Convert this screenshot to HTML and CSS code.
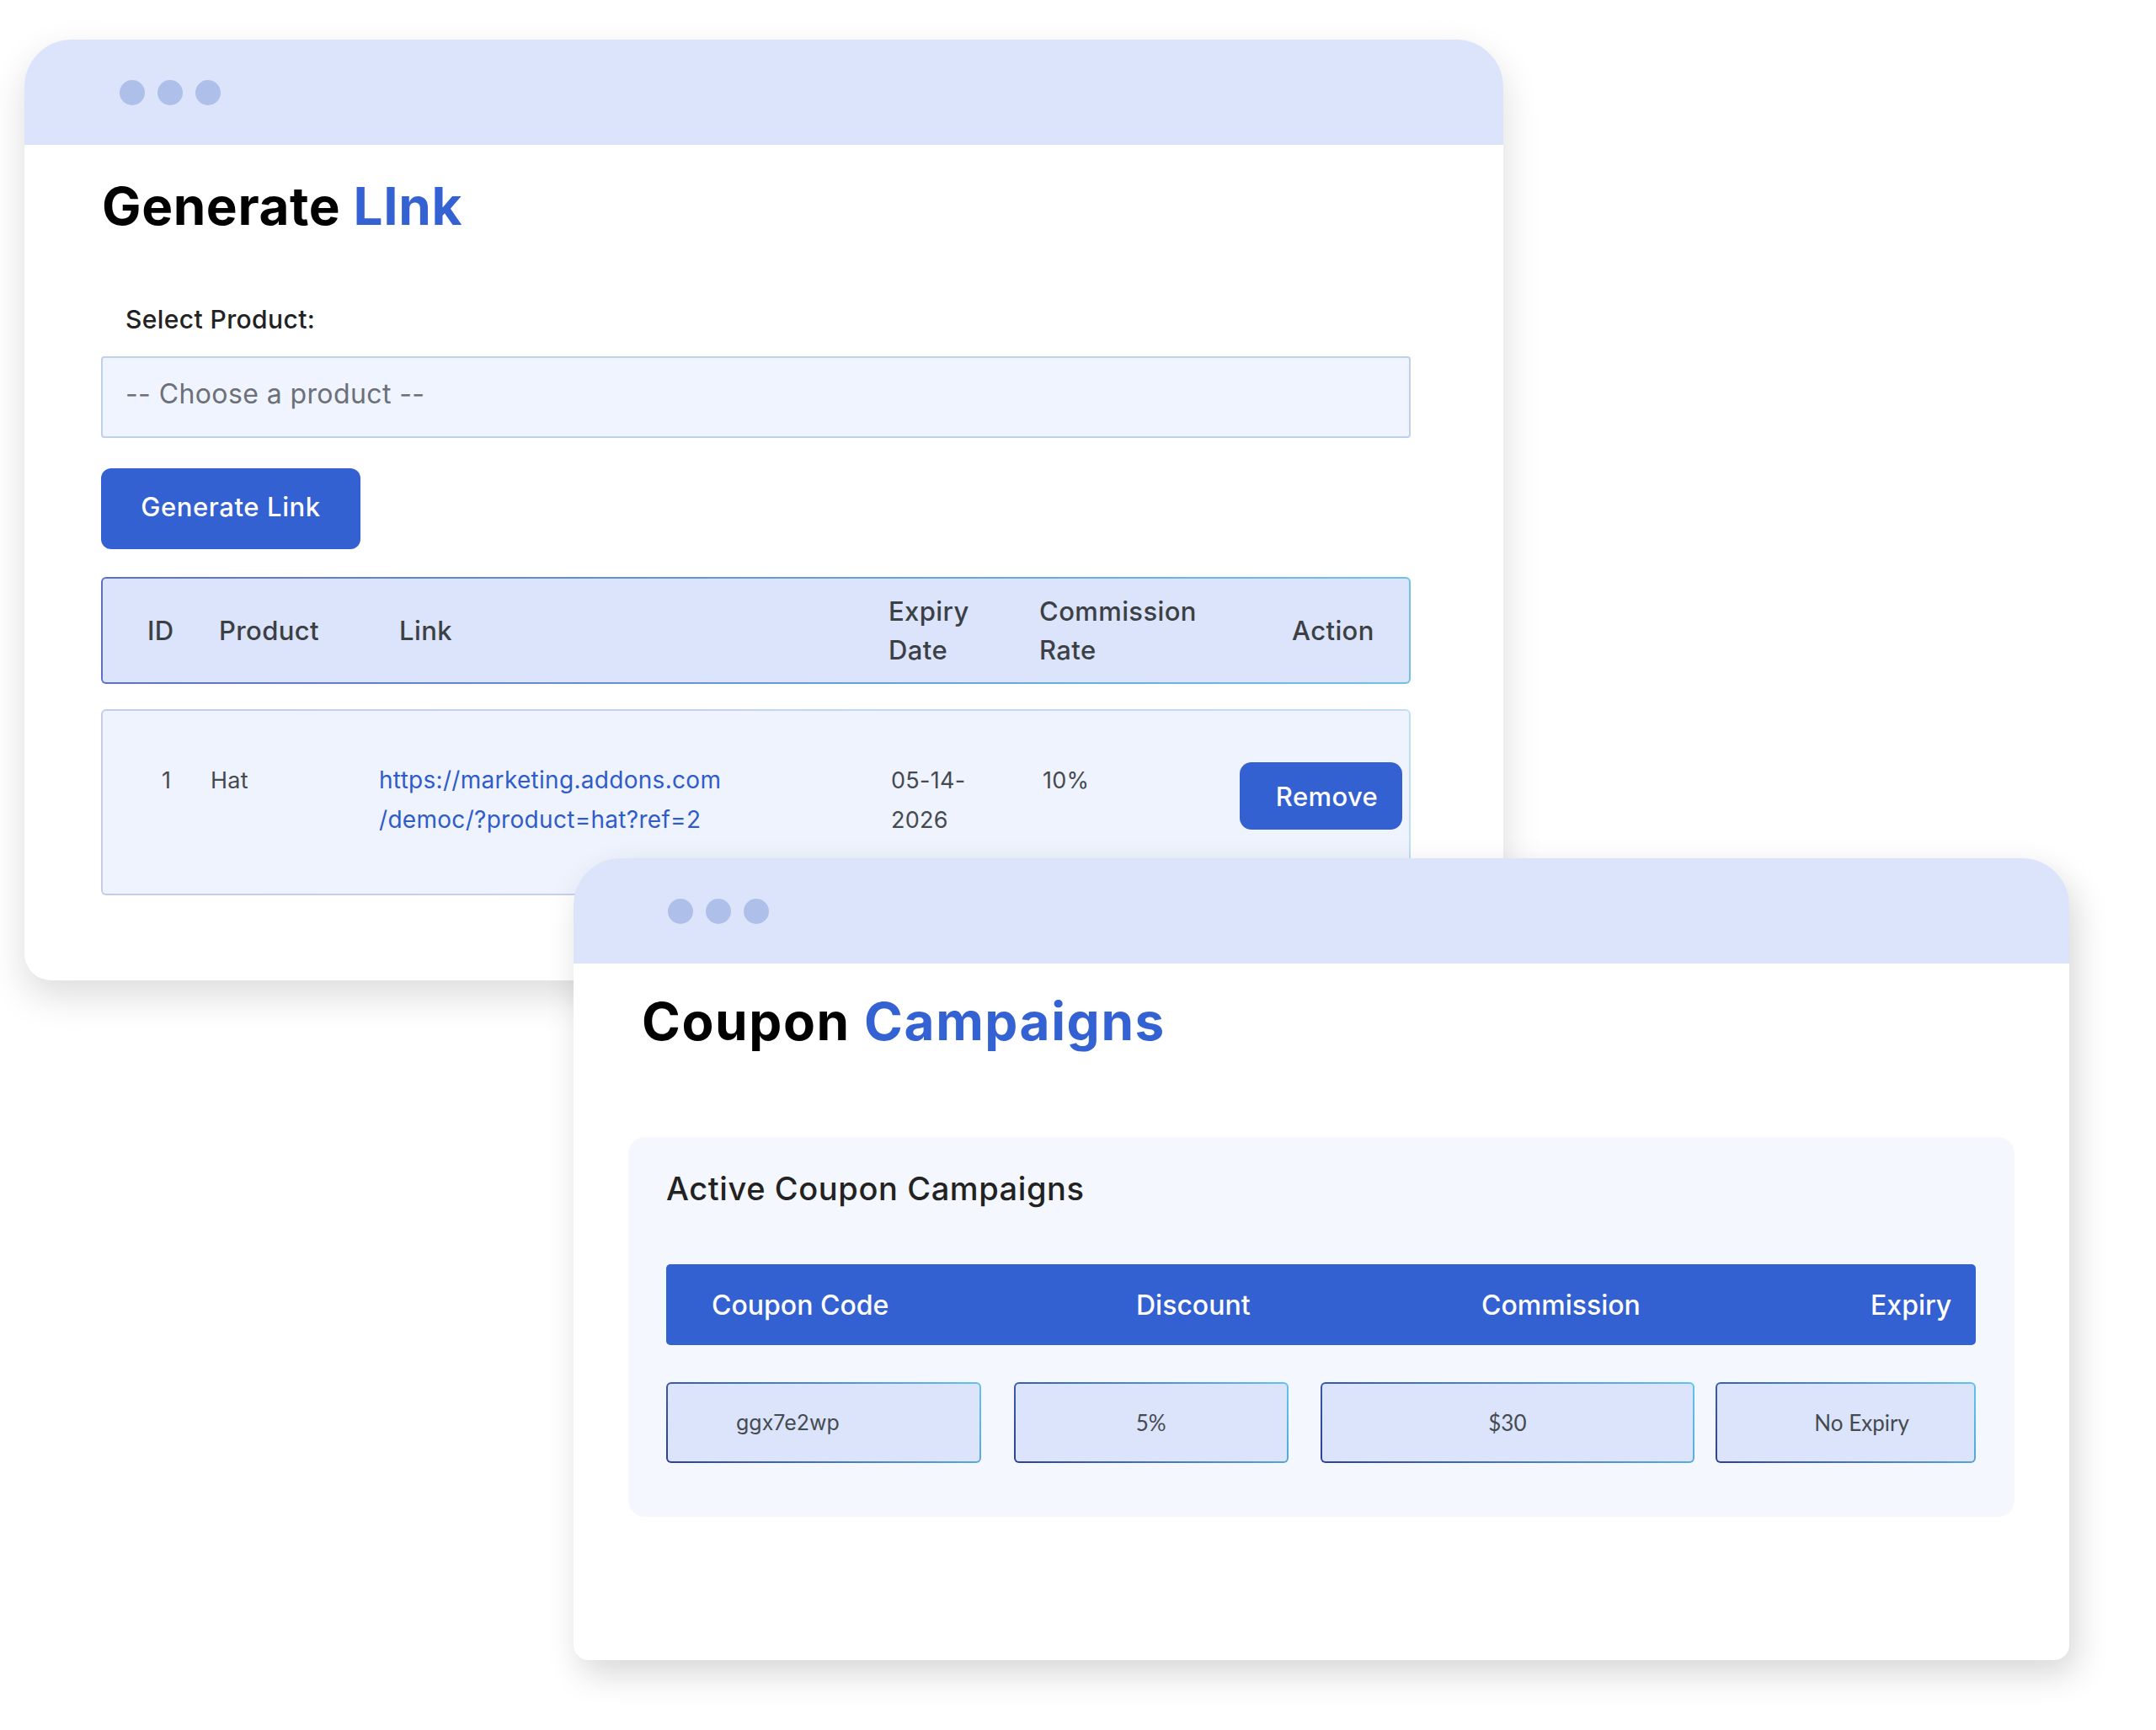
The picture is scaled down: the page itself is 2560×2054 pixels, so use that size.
FILE: index.html
```html
<!DOCTYPE html>
<html>
    <head>
        <link rel="stylesheet" href="styles.css">
    </head>
    <body>
        <div class="desk">
            <section class="window window-links">
                <div class="window-bar">
                    <span class="dot"></span>
                    <span class="dot"></span>
                    <span class="dot"></span>
                </div>
                <div class="window-body links-body">
                    <h1 class="title">Generate <span class="accent">LInk</span></h1>
                    <div class="field-label">Select Product:</div>
                    <div class="select-box">-- Choose a product --</div>
                    <button class="btn btn-generate">Generate Link</button>

                    <div class="link-head">
                        <div>ID</div>
                        <div>Product</div>
                        <div>Link</div>
                        <div class="narrow">Expiry Date</div>
                        <div class="narrow">Commission Rate</div>
                        <div>Action</div>
                    </div>

                    <div class="link-row">
                        <div>1</div>
                        <div>Hat</div>
                        <div class="link-url">https://marketing.addons.com<br>/democ/?product=hat?ref=2</div>
                        <div class="narrow-date">05-14-2026</div>
                        <div>10%</div>
                        <div><button class="btn btn-remove">Remove</button></div>
                    </div>
                </div>
            </section>

            <section class="window window-coupons">
                <div class="window-bar">
                    <span class="dot"></span>
                    <span class="dot"></span>
                    <span class="dot"></span>
                </div>
                <div class="window-body coupons-body">
                    <h1 class="title">Coupon <span class="accent">Campaigns</span></h1>

                    <div class="coupon-card">
                        <h2 class="card-title">Active Coupon Campaigns</h2>
                        <div class="coupon-head">
                            <div>Coupon Code</div>
                            <div>Discount</div>
                            <div>Commission</div>
                            <div class="last">Expiry</div>
                        </div>
                        <div class="coupon-row">
                            <div class="cell cell-code">ggx7e2wp</div>
                            <div class="cell cell-discount">5%</div>
                            <div class="cell cell-commission">$30</div>
                            <div class="cell cell-expiry">No Expiry</div>
                        </div>
                    </div>
                </div>
            </section>
        </div>
    </body>
</html>
```

FILE: styles.css
```css
body, html {
    margin: 0;
    padding: 0;
    background-color: white;
    font-family: 'Inter', 'Noto Sans', sans-serif;
    color: #3b4045;
}

.desk {
    position: relative;
    width: 2560px;
    height: 2054px;
    overflow: hidden;
}

/* windows sit on a free canvas */
.window {
    position: absolute;
    background: white;
    display: flex;
    flex-direction: column;
}

.window-links {
    left: 29px;
    top: 47px;
    width: 1756px;
    height: 1117px;
    border-radius: 56px 56px 32px 32px;
    box-shadow: 0 18px 45px rgba(0,0,0,0.14);
}

.window-coupons {
    left: 681px;
    top: 1019px;
    width: 1776px;
    height: 952px;
    border-radius: 58px 58px 18px 18px;
    box-shadow: 8px 16px 40px rgba(0,0,0,0.16);
}

.window-bar {
    height: 125px;
    flex-shrink: 0;
    background-color: #dbe4fa;
    border-radius: 56px 56px 0 0;
    display: flex;
    align-items: center;
    gap: 15px;
    padding-left: 113px;
}

.window-coupons .window-bar {
    padding-left: 112px;
}

.dot {
    width: 30px;
    height: 30px;
    border-radius: 50%;
    background-color: #aec0ea;
}

.title {
    margin: 0;
    font-size: 62px;
    line-height: 72px;
    font-weight: 700;
    color: #000;
    letter-spacing: 0.6px;
}

.accent {
    color: #3462d2;
}

/* generate link window */
.links-body {
    padding: 37px 110px 0 91px;
}

.links-body .title {
    margin-left: 1px;
}

.field-label {
    margin-top: 76px;
    padding-left: 29px;
    font-size: 30px;
    line-height: 45px;
    font-weight: 500;
    color: #222;
    letter-spacing: 0.4px;
}

.select-box {
    margin-top: 21px;
    box-sizing: border-box;
    height: 97px;
    border: 2px solid #bfd0ea;
    border-radius: 4px;
    background-color: #f0f4fe;
    padding: 0 0 8px 27px;
    display: flex;
    align-items: center;
    font-size: 32px;
    letter-spacing: 0.4px;
    color: #6c7078;
}

.btn {
    border: none;
    font-family: inherit;
    color: white;
    background-color: #3461d1;
    cursor: pointer;
}

.btn-generate {
    margin-top: 36px;
    align-self: flex-start;
    width: 308px;
    height: 96px;
    border-radius: 12px;
    font-size: 31px;
    font-weight: 500;
    letter-spacing: 0.6px;
    padding: 0 0 6px 0;
}

.link-head {
    margin-top: 33px;
    height: 127px;
    box-sizing: border-box;
    border: 2px solid transparent;
    border-radius: 6px;
    background: linear-gradient(#dbe4fa, #dbe4fa) padding-box,
                linear-gradient(90deg, #5d70c8, #6fc2e6) border-box;
    display: grid;
    grid-template-columns: 85px 214px 581px 179px 300px auto;
    align-items: center;
    padding-left: 53px;
    font-size: 31px;
    line-height: 46px;
    font-weight: 500;
    letter-spacing: 0.4px;
    color: #3b4045;
}

.link-head .narrow {
    max-width: 150px;
}

.link-row {
    margin-top: 30px;
    height: 221px;
    box-sizing: border-box;
    border: 2px solid transparent;
    border-radius: 6px;
    background: linear-gradient(#eff3fe, #eff3fe) padding-box,
                linear-gradient(90deg, #c6cce8, #bfe0f2) border-box;
    display: grid;
    grid-template-columns: 58px 200px 608px 180px 234px auto;
    align-items: start;
    padding: 59px 0 0 70px;
    font-size: 27px;
    line-height: 47px;
    letter-spacing: 0.3px;
    color: #454a50;
}

.link-url {
    color: #2f5cc9;
    font-size: 28px;
    letter-spacing: 0.3px;
}

.narrow-date {
    max-width: 95px;
}

.btn-remove {
    margin-top: 2px;
    width: 193px;
    height: 80px;
    border-radius: 14px;
    font-size: 31px;
    font-weight: 500;
    letter-spacing: 0.4px;
    padding: 0 14px 0 28px;
}

/* coupons window */
.coupons-body {
    padding: 33px 65px 0 65px;
}

.coupons-body .title {
    margin-left: 16px;
    letter-spacing: 1.6px;
}

.coupon-card {
    margin-top: 101px;
    background-color: #f4f7fe;
    border-radius: 20px;
    padding: 35px 46px 64px 45px;
}

.card-title {
    margin: 0;
    font-size: 38px;
    line-height: 52px;
    font-weight: 500;
    letter-spacing: 0.6px;
    color: #222;
}

.coupon-head {
    margin-top: 64px;
    height: 96px;
    border-radius: 5px;
    background-color: #3461d1;
    color: white;
    display: grid;
    grid-template-columns: 504px 410px 462px 1fr;
    align-items: center;
    padding: 0 34px 0 54px;
    font-size: 32px;
    font-weight: 500;
}

.coupon-head .last {
    text-align: right;
}

.coupon-row {
    margin-top: 44px;
    display: flex;
}

.cell {
    height: 96px;
    box-sizing: border-box;
    border: 2px solid transparent;
    border-radius: 6px;
    background: linear-gradient(#dbe4fa, #dbe4fa) padding-box,
                linear-gradient(45deg, #2f3f98, #62c4ea) border-box;
    display: flex;
    align-items: center;
    justify-content: center;
    font-family: 'Lato', sans-serif;
    font-size: 26px;
    color: #454a50;
}

.cell-code {
    width: 374px;
    justify-content: flex-start;
    padding-left: 81px;
    font-family: 'Inter', sans-serif;
    font-size: 25px;
}

.cell-discount {
    width: 326px;
    margin-left: 39px;
}

.cell-commission {
    width: 445px;
    margin-left: 38px;
}

.cell-expiry {
    width: 309px;
    margin-left: 25px;
    padding-left: 38px;
}
```
